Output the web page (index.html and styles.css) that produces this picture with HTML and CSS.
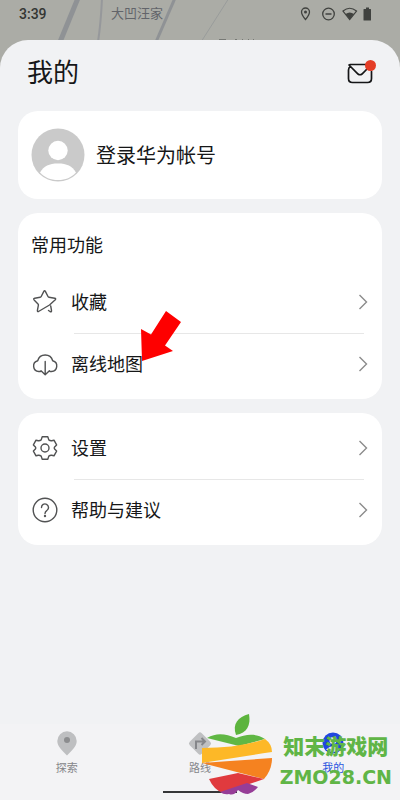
FILE: index.html
```html
<!DOCTYPE html>
<html lang="zh-CN">
<head>
<meta charset="utf-8">
<meta name="viewport" content="width=device-width, initial-scale=1">
<title>我的</title>
<link rel="stylesheet" href="styles.css">
</head>
<body>
<div class="app">
  <header class="map">
    <svg class="roads" width="400" height="70" viewBox="0 0 400 70" fill="none" aria-hidden="true">
      <path d="M78 -2 60 42" stroke="#8f9295" stroke-width="5"/>
      <path d="M102 -2Q101 22 98 42" stroke="#96989b" stroke-width="2"/>
      <path d="M175 -2 156 42" stroke="#8f9295" stroke-width="3"/>
      <path d="M229 -2 201 42" stroke="#999c9b" stroke-width="1"/>
      <path d="M219 39.500h7M235 39.500h2M242 39.500h1M248 39.500h1M253 39.500h1" stroke="#777975"/>
    </svg>
    <div class="status">
      <time class="clock">3:39</time>
      <span class="place">大凹汪家</span>
      <svg class="indicators" width="76" height="16" viewBox="0 0 76 16" fill="none" aria-hidden="true">
        <path d="M7.500 13.500C5 10.500 3.500 8.500 3.500 6a4 4 0 0 1 8 0c0 2.500-1.500 4.500-4 7.500Z" stroke="#40423f" stroke-width="1.300"/>
        <circle cx="7.500" cy="6" r="1.500" fill="#40423f"/>
        <circle cx="30.500" cy="8" r="5.800" stroke="#40423f" stroke-width="1.300"/>
        <path d="M27.500 8h6" stroke="#40423f" stroke-width="1.500"/>
        <path d="M45 5Q51.700-.5 58.500 5L51.700 13.500Z" stroke="#40423f" stroke-width="1.200"/>
        <path d="M47.500 8Q51.700 5 56 8L51.700 13.500Z" fill="#40423f"/>
        <path d="M66.500 3H68V1.500h3V3h1.500q.5 0 .5.500V14q0 .5-.5.500h-6.500q-.5 0-.5-.5V3.500q0-.5.5-.5Z" fill="#40423f"/>
      </svg>
    </div>
  </header>

  <main class="sheet">
    <div class="title-bar">
      <h1>我的</h1>
      <button class="mail" type="button" aria-label="消息">
        <svg width="32" height="28" viewBox="0 0 32 28" fill="none">
          <path d="M5.500 7.500Q3.500 8.500 3.500 11v8.500q0 4 4 4h15q4 0 4-4v-7M5 5.500h16M4 6l9 9q2 1.500 4 0L23.500 8.500" stroke="#151617" stroke-width="1.700" stroke-linecap="round"/>
          <circle cx="25.500" cy="6.500" r="5.500" fill="#e43d26"/>
        </svg>
      </button>
    </div>

    <a class="card account" href="#login">
      <svg width="54" height="54" viewBox="0 0 54 54" aria-hidden="true">
        <circle cx="27" cy="27" r="26.500" fill="#cacaca"/>
        <circle cx="27" cy="22.500" r="9.700" fill="#fff"/>
        <path d="M9 44.500C13 38 18 35.500 27 35.500s14 2.500 18 9C40.500 49.500 34.500 52 27 52S13.500 49.500 9 44.500Z" fill="#fff"/>
      </svg>
      <span class="label">登录华为帐号</span>
    </a>

    <section class="card">
      <h2>常用功能</h2>
      <ul>
        <li><a class="row" href="#favorites">
          <svg class="icon" viewBox="0 0 26 26" aria-hidden="true"><path d="M16.500 21.500l1.500 1q1.800.8 1.500-1.200l-.8-4.300M6.500 22.500 17.500 16 23.300 10.800q1-1.300-.6-1.600l-5.700-.9q-.7-.1-1-.8l-2.500-4.900q-.9-1.600-1.800 0L9.200 7.500q-.3.700-1 .8l-5.500.9q-1.700.4-.6 1.700l3.900 4q.5.500.4 1.200l-1 5.200q-.1 1.700 1.100 1.200"/></svg>
          <span class="label">收藏</span>
          <svg class="chevron" viewBox="0 0 10 16" aria-hidden="true"><path d="M1.500 1 8.500 8 1.500 15"/></svg>
        </a></li>
        <li><a class="row" href="#offline">
          <svg class="icon" viewBox="0 0 26 26" aria-hidden="true"><path d="M8.500 20.500H6.800A5.500 5.500 0 0 1 5.700 9.700 7.800 7.800 0 0 1 20.700 9.700 5.500 5.500 0 0 1 19.500 20.500H18M13.200 10.500v13M9 19.700l4.200 4 4.200-4"/></svg>
          <span class="label">离线地图
            <svg class="pointer" width="40" height="51" viewBox="0 0 40 51" aria-hidden="true"><path d="M25 0 40 11 24 34.500 32 40 1 50 0 18 10 23.500Z" fill="#fe0000"/></svg>
          </span>
          <svg class="chevron" viewBox="0 0 10 16" aria-hidden="true"><path d="M1.500 1 8.500 8 1.500 15"/></svg>
        </a></li>
      </ul>
    </section>

    <section class="card">
      <ul>
        <li><a class="row" href="#settings">
          <svg class="icon" viewBox="0 0 26 26" aria-hidden="true"><circle cx="13" cy="13" r="4"/><path d="M10.200 1.800h5.600l1 3.100q1.300 1 2.900.8l2.300-.5 2.600 4.700-2 2q-.8 1.100 0 2.200l2 2-2.600 4.700-2.300-.5q-1.600-.2-2.900.8l-1 3.100h-5.600l-1-3.100q-1.300-1-2.900-.8l-2.300.5-2.600-4.700 2-2q.8-1.100 0-2.200l-2-2L4 5.200l2.300.5q1.600.2 2.900-.8Z"/></svg>
          <span class="label">设置</span>
          <svg class="chevron" viewBox="0 0 10 16" aria-hidden="true"><path d="M1.500 1 8.500 8 1.500 15"/></svg>
        </a></li>
        <li><a class="row" href="#help">
          <svg class="icon" viewBox="0 0 26 26" aria-hidden="true"><circle cx="13" cy="13" r="11.800"/><path d="M9.500 10.500a3.500 3.500 0 1 1 5.500 2.800q-2 1.200-2 3.200"/><circle cx="13" cy="19" r=".5"/></svg>
          <span class="label">帮助与建议</span>
          <svg class="chevron" viewBox="0 0 10 16" aria-hidden="true"><path d="M1.500 1 8.500 8 1.500 15"/></svg>
        </a></li>
      </ul>
    </section>
  </main>

  <nav class="tabs">
    <a href="#explore">
      <svg width="26" height="26" viewBox="0 0 26 26" aria-hidden="true"><path d="M13 24.500C8.500 19.500 3.300 15.500 3.300 10a9.700 9.700 0 0 1 19.400 0C22.700 15.500 17.500 19.500 13 24.500Z" fill="#bebfc1"/><circle cx="13" cy="9" r="3" fill="#8c8d8f"/></svg>
      <span>探索</span>
    </a>
    <a href="#routes">
      <svg width="26" height="26" viewBox="0 0 26 26" aria-hidden="true"><rect x="4.500" y="4" width="17" height="17" rx="2.500" transform="rotate(45 13 12.500)" fill="#bfc0c2"/><path d="M9 18V10.500h8M14.500 7 18 10.500 14.500 14" fill="none" stroke="#85868a" stroke-width="2"/></svg>
      <span>路线</span>
    </a>
    <a class="active" href="#me">
      <svg width="26" height="26" viewBox="0 0 26 26" aria-hidden="true"><circle cx="13" cy="12" r="10.500" fill="#2047df"/><circle cx="13" cy="9.500" r="3.500" fill="#dce4ff"/><path d="M6 18.500q7-7 14 0-7 5-14 0Z" fill="#dce4ff"/></svg>
      <span>我的</span>
    </a>
    <div class="home-bar"></div>
    <div class="brand">
      <svg width="72" height="82" viewBox="0 0 72 82" aria-hidden="true">
        <path d="M34 21C30 10 36 3 47 0c2 11-2 19-13 21Z" fill="#5cb43d"/>
        <path d="M5 24C15 18 24 20 34 24 44 20 54 19 63 25L37 32Z" fill="#60b744"/>
        <path d="M0 34Q38 34 63 25 70 30 70 38 36 43 0 49Z" fill="#fdb827"/>
        <path d="M0 49 28 47 70 44Q70 56 62 65Z" fill="#f58220"/>
        <path d="M7 65 36 59 62 65 21 79Q12 76 7 65Z" fill="#e03a3e"/>
        <path d="M18 78 45 69 56 73Q51 79 46 80 41 80 36 76 32 82 27 80 22 81 18 78Z" fill="#963d97"/>
      </svg>
      <div class="brand-text"><b>知末游戏网</b><strong>ZMO28.CN</strong></div>
    </div>
  </nav>
</div>
</body>
</html>
```

FILE: styles.css
```css
* {
  box-sizing: border-box;
}

body {
  margin: 0;
  background: #f1f2f4;
  color: #161718;
  font-family: Roboto, "Noto Sans CJK SC", sans-serif;
  font-size: 18px;
  line-height: 24px;
}

a {
  color: inherit;
  text-decoration: none;
}

svg {
  display: block;
  flex: none;
}

h1,
h2,
ul {
  margin: 0;
  padding: 0;
  font-weight: 400;
  list-style: none;
}

.app {
  display: flex;
  flex-direction: column;
  min-height: 100vh;
}

.map {
  position: relative;
  height: 72px;
  overflow: hidden;
  background: #abaca6;
}

.roads {
  position: absolute;
  top: 0;
  left: 0;
}

.status {
  position: relative;
  display: flex;
  align-items: center;
  height: 28px;
  padding: 0 26px 0 19px;
}

.clock {
  width: 92px;
  color: #343633;
  font-size: 14px;
  font-weight: 500;
}

.place {
  color: #62646a;
  font-size: 13px;
}

.indicators {
  margin-left: auto;
}

.sheet {
  position: relative;
  flex: 1;
  display: flex;
  flex-direction: column;
  gap: 14px;
  margin-top: -32px;
  padding: 0 18px 14px;
  border-radius: 28px 28px 0 0;
  background: #f1f2f4;
}

.title-bar {
  display: flex;
  align-items: center;
  justify-content: space-between;
  height: 57px;
  padding: 8px 5px 0 9px;
}

h1 {
  font-size: 26px;
  line-height: 32px;
}

.mail {
  padding: 0;
  border: 0;
  background: none;
}

.card {
  padding: 4px 14px;
  border-radius: 20px;
  background: #fff;
}

.account {
  display: flex;
  align-items: center;
  gap: 11px;
  height: 88px;
  padding: 0 13px;
  font-size: 20px;
}

h2 {
  padding-top: 4px;
  font-size: 18px;
  line-height: 50px;
}

.card h2 {
  margin-left: -1px;
}

li {
  position: relative;
}

li + li::before {
  content: "";
  position: absolute;
  top: 0;
  left: 42px;
  right: 4px;
  height: 1px;
  background: #e7e7e7;
}

.row {
  display: flex;
  align-items: center;
  gap: 13px;
  height: 62px;
}

.icon {
  width: 26px;
  height: 26px;
  fill: none;
  stroke: #515253;
  stroke-width: 1.4px;
  stroke-linecap: round;
  stroke-linejoin: round;
}

.label {
  position: relative;
  padding-top: 2px;
}

.pointer {
  position: absolute;
  top: -40px;
  left: 70px;
}

.chevron {
  width: 10px;
  height: 16px;
  margin-left: auto;
  fill: none;
  stroke: #8b8b8b;
  stroke-width: 1.4px;
}

.tabs {
  position: relative;
  display: flex;
  height: 76px;
  padding-top: 7px;
  background: #f3f3f5;
  color: #85868a;
  font-size: 11px;
  line-height: 24px;
}

.tabs a {
  flex: 1;
  display: flex;
  flex-direction: column;
  align-items: center;
}

.tabs .active {
  color: #2a55e0;
}

.home-bar {
  position: absolute;
  bottom: 7px;
  left: 50%;
  width: 74px;
  height: 2px;
  margin-left: -37px;
  background: #353638;
}

.brand {
  position: absolute;
  right: 8px;
  bottom: 4px;
  display: flex;
  align-items: flex-end;
  gap: 6px;
  color: #60b546;
}

.brand-text {
  display: flex;
  flex-direction: column;
  align-items: center;
  padding-bottom: 5px;
}

.brand-text b {
  font-size: 21px;
  font-weight: 900;
  line-height: 32px;
}

.brand-text strong {
  font-family: "DejaVu Sans", sans-serif;
  font-size: 19px;
  font-weight: 700;
  line-height: 28px;
}
```
